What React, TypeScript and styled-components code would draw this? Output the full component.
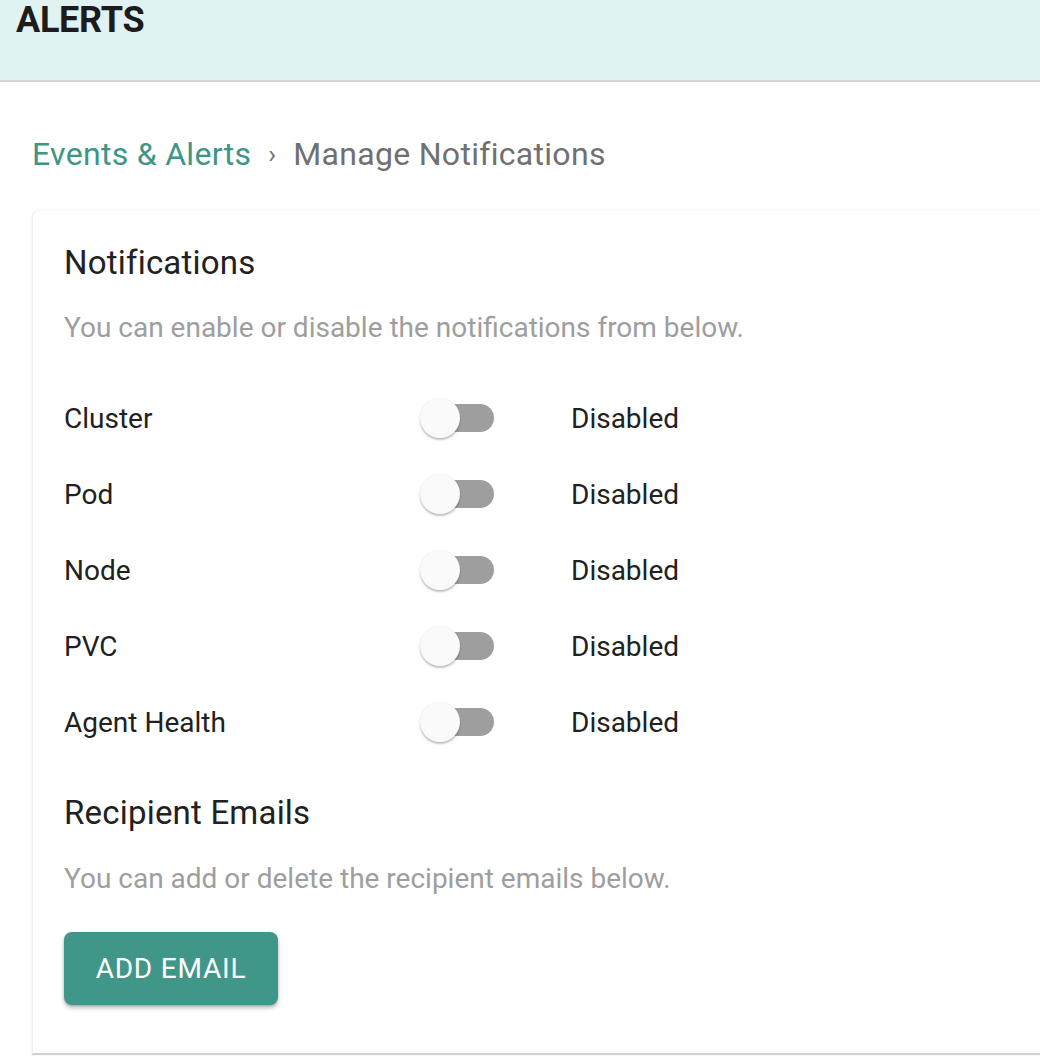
import React from "react";
import styled, { createGlobalStyle } from "styled-components";

const Global = createGlobalStyle`
  html, body { margin: 0; padding: 0; background: #ffffff; overflow: hidden; }
  body { font-family: Roboto, "Liberation Sans", Arial, sans-serif; }
  * { box-sizing: border-box; }
`;

const Page = styled.div`
  width: 1040px;
  height: 1058px;
  overflow: hidden;
  background: #ffffff;
`;

const Header = styled.header`
  height: 82px;
  background: #e0f2f1;
  border-bottom: 2px solid #d4d4d4;
  padding: 2px 16px 0;
`;

const HeaderTitle = styled.h1`
  margin: 0;
  font-size: 36px;
  line-height: 36px;
  font-weight: 700;
  color: #1c1c1c;
  letter-spacing: -0.3px;
`;

const Content = styled.main`
  padding: 56px 0 0 32px;
`;

const Breadcrumb = styled.nav`
  display: flex;
  align-items: center;
  gap: 17px;
  font-size: 32px;
  line-height: 32px;
  height: 32px;
  letter-spacing: 0.3px;
`;

const Crumb = styled.span<{ $active?: boolean }>`
  color: ${(p) => (p.$active ? "#707070" : "#3d9585")};
`;

const Sep = styled.span`
  color: #707070;
  font-size: 26px;
`;

const Card = styled.section`
  margin-top: 40px;
  margin-right: -24px;
  background: #ffffff;
  border-radius: 8px 8px 0 0;
  box-shadow: 0 0 3px rgba(0, 0, 0, 0.08);
  border-left: 1px solid #efefef;
  border-bottom: 2px solid #d2d2d2;
  padding: 36px 31px 48px 31px;
`;

const SectionTitle = styled.h2<{ $top?: number }>`
  margin: ${(p) => p.$top ?? 0}px 0 0;
  font-size: 33px;
  line-height: 33px;
  font-weight: 400;
  letter-spacing: 0.2px;
  color: #212121;
`;

const Hint = styled.p<{ $top: number }>`
  margin: ${(p) => p.$top}px 0 0;
  font-size: 28px;
  line-height: 28px;
  color: #9e9e9e;
`;

const Rows = styled.div`
  margin-top: 38px;
  display: flex;
  flex-direction: column;
`;

const Row = styled.div`
  height: 76px;
  display: grid;
  grid-template-columns: 356px 151px auto;
  align-items: center;
  font-size: 28px;
  color: #212121;
`;

const SwitchTrack = styled.div`
  position: relative;
  width: 74px;
  height: 40px;
`;

const Track = styled.div`
  position: absolute;
  left: 6px;
  top: 6px;
  width: 68px;
  height: 28px;
  border-radius: 14px;
  background: #9e9e9e;
`;

const Knob = styled.div`
  position: absolute;
  left: 0;
  top: 0;
  width: 40px;
  height: 40px;
  border-radius: 50%;
  background: #fafafa;
  box-shadow: 0 2px 2px rgba(0, 0, 0, 0.24), 0 0 1px rgba(0, 0, 0, 0.12);
`;

const Status = styled.span`
  color: #212121;
`;

const Button = styled.button`
  margin-top: 39px;
  width: 214px;
  height: 73px;
  border: none;
  border-radius: 8px;
  background: #41968a;
  color: #ffffff;
  font-family: Roboto, "Liberation Sans", Arial, sans-serif;
  font-size: 28px;
  font-weight: 400;
  letter-spacing: 0.8px;
  text-transform: uppercase;
  box-shadow: 0 3px 4px rgba(0, 0, 0, 0.25), 0 1px 2px rgba(0, 0, 0, 0.15);
  cursor: pointer;
`;

const items = ["Cluster", "Pod", "Node", "PVC", "Agent Health"];

export default function App() {
  return (
    <Page>
      <Global />
      <Header>
        <HeaderTitle>ALERTS</HeaderTitle>
      </Header>
      <Content>
        <Breadcrumb>
          <Crumb>Events &amp; Alerts</Crumb>
          <Sep>›</Sep>
          <Crumb $active>Manage Notifications</Crumb>
        </Breadcrumb>
        <Card>
          <SectionTitle>Notifications</SectionTitle>
          <Hint $top={35}>You can enable or disable the notifications from below.</Hint>
          <Rows>
            {items.map((name) => (
              <Row key={name}>
                <span>{name}</span>
                <SwitchTrack role="switch" aria-checked={false}>
                  <Track />
                  <Knob />
                </SwitchTrack>
                <Status>Disabled</Status>
              </Row>
            ))}
          </Rows>
          <SectionTitle $top={36}>Recipient Emails</SectionTitle>
          <Hint $top={36}>You can add or delete the recipient emails below.</Hint>
          <Button>Add Email</Button>
        </Card>
      </Content>
    </Page>
  );
}
